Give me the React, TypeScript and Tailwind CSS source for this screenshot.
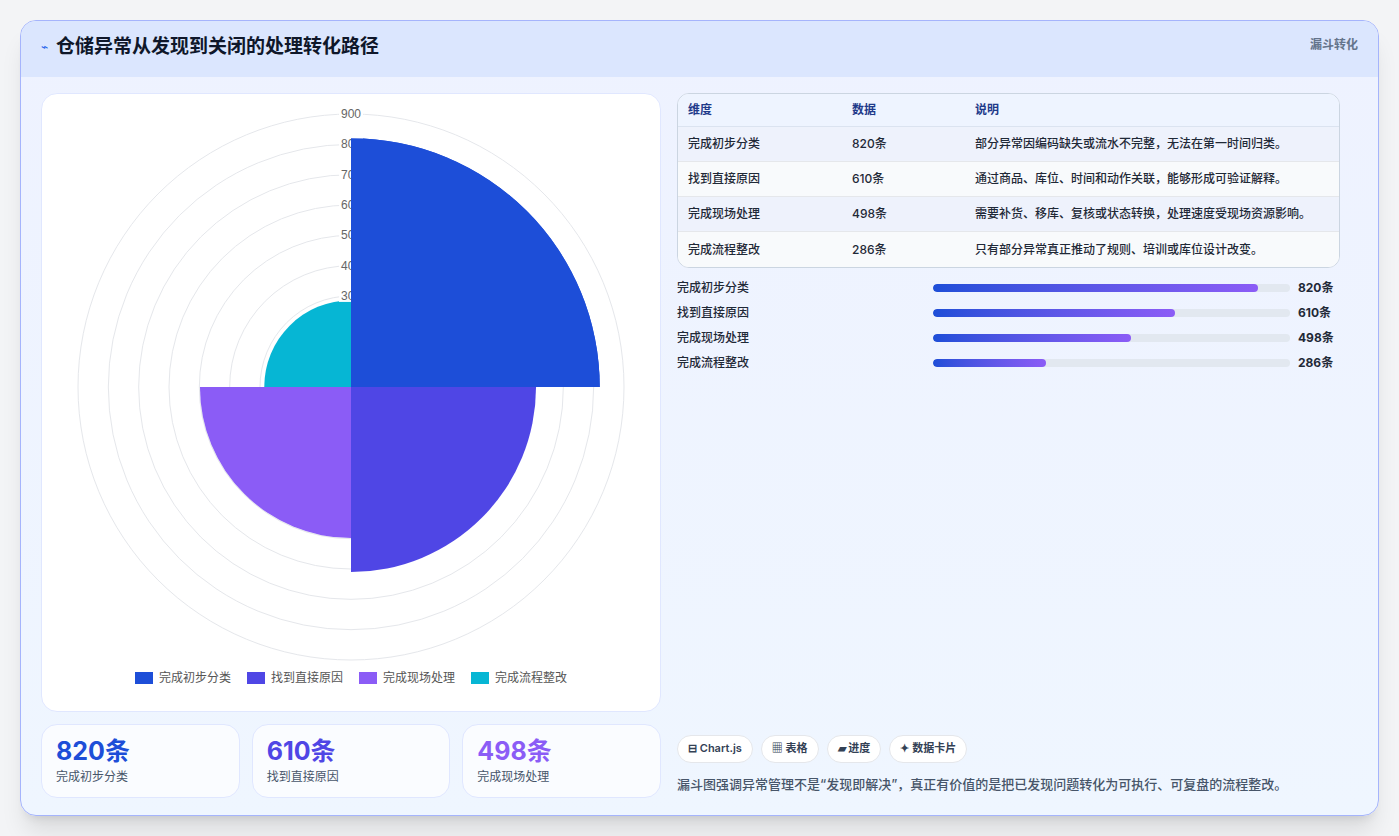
import React from "react";

const rows = [
  { name: "完成初步分类", v: 820, note: "部分异常因编码缺失或流水不完整，无法在第一时间归类。", color: "#1d4ed8" },
  { name: "找到直接原因", v: 610, note: "通过商品、库位、时间和动作关联，能够形成可验证解释。", color: "#4f46e5" },
  { name: "完成现场处理", v: 498, note: "需要补货、移库、复核或状态转换，处理速度受现场资源影响。", color: "#8b5cf6" },
  { name: "完成流程整改", v: 286, note: "只有部分异常真正推动了规则、培训或库位设计改变。", color: "#06b6d4" },
];

function sector(cx: number, cy: number, r: number, a0: number, a1: number) {
  const p = (a: number) => [cx + r * Math.sin(a), cy - r * Math.cos(a)];
  const [x0, y0] = p(a0);
  const [x1, y1] = p(a1);
  return `M${cx},${cy} L${x0},${y0} A${r},${r} 0 0 1 ${x1},${y1} Z`;
}

function Polar() {
  const cx = 310, cy = 293, k = 273 / 900;
  return (
    <svg width="620" height="570" viewBox="0 0 620 570">
      {[1, 2, 3, 4, 5, 6, 7, 8, 9].map((i) => (
        <circle key={i} cx={cx} cy={cy} r={i * 100 * k} fill="none" stroke="#e5e7eb" strokeWidth="1" />
      ))}
      {rows.map((r, i) => (
        <path key={r.name} d={sector(cx, cy, r.v * k, (i * Math.PI) / 2, ((i + 1) * Math.PI) / 2)} fill={r.color} />
      ))}
      {[3, 4, 5, 6, 7, 8, 9].map((i) => (
        <g key={i}>
          <rect x={cx - 12} y={cy - i * 100 * k - 7} width="24" height="13" fill="white" opacity={i === 9 ? 1 : 0.9} />
          <text x={cx} y={cy - i * 100 * k + 4} textAnchor="middle" fontSize="12" fill="#666" fontFamily="Liberation Sans, sans-serif">{i * 100}</text>
        </g>
      ))}
      {rows.map((r, i) => (
        <path key={"c" + i} d={sector(cx, cy, r.v * k, (i * Math.PI) / 2, ((i + 1) * Math.PI) / 2)} fill={r.color} opacity={i === 0 ? 1 : 0} />
      ))}
    </svg>
  );
}

export default function App() {
  return (
    <div className="w-[1399px] h-[836px] bg-[#f3f4f6] p-5" style={{ fontFamily: "Inter, 'Noto Sans CJK SC', sans-serif" }}>
      <div className="h-[796px] rounded-2xl border border-[#a5b4fc] bg-gradient-to-b from-[#eef2ff] to-[#eff6ff] shadow-xl overflow-hidden flex flex-col">
        <div className="h-[56px] bg-[#dbe6fe] flex items-start justify-between px-5 pt-4">
          <div className="flex items-center gap-2">
            <span className="text-[#2563eb] text-xs">⌁</span>
            <h1 className="text-[19px] font-bold text-[#0f172a] leading-none">仓储异常从发现到关闭的处理转化路径</h1>
          </div>
          <span className="text-xs font-semibold text-[#64748b]">漏斗转化</span>
        </div>
        <div className="flex gap-4 px-5 pt-4 flex-1">
          <div className="w-[620px] flex flex-col gap-3">
            <div className="h-[619px] bg-white rounded-2xl border border-[#e0e7ff] flex flex-col items-center">
              <div className="h-[572px] flex items-start pt-0"><Polar /></div>
              <div className="flex gap-4 text-xs text-[#555] mt-1">
                {rows.map((r) => (
                  <div key={r.name} className="flex items-center gap-1.5">
                    <span className="w-[18px] h-[12px] inline-block" style={{ background: r.color }} />
                    {r.name}
                  </div>
                ))}
              </div>
            </div>
            <div className="grid grid-cols-3 gap-3">
              {rows.slice(0, 3).map((r) => (
                <div key={r.name} className="h-[74px] bg-white/70 rounded-2xl border border-[#e0e7ff] px-3.5 pt-2.5">
                  <div className="text-[25px] font-bold leading-[32px]" style={{ color: r.color }}>{r.v}条</div>
                  <div className="text-xs text-[#475569] mt-0.5">{r.name}</div>
                </div>
              ))}
            </div>
          </div>
          <div className="flex-1 flex flex-col pr-[18px]">
            <div className="rounded-xl border border-[#cbd5e1] overflow-hidden bg-white">
              <div className="grid grid-cols-[164px_123px_1fr] h-[33px] items-center px-2.5 bg-[#eef4ff] text-xs font-semibold text-[#1e3a8a] border-b border-[#dbe3f0]">
                <span>维度</span><span>数据</span><span>说明</span>
              </div>
              {rows.map((r, i) => (
                <div key={r.name} className={`grid grid-cols-[164px_123px_1fr] h-[35px] items-center px-2.5 text-xs text-[#1f2937] font-medium border-b border-[#e5e7eb] last:border-b-0 ${i % 2 === 0 ? "bg-[#eef2fc]" : "bg-[#f8fafc]"}`}>
                  <span>{r.name}</span><span>{r.v}条</span><span>{r.note}</span>
                </div>
              ))}
            </div>
            <div className="flex flex-col gap-[9px] mt-3">
              {rows.map((r) => (
                <div key={r.name} className="flex items-center h-4 text-xs font-medium text-[#1f2937]">
                  <span className="w-[256px]">{r.name}</span>
                  <div className="w-[357px] h-2 rounded-full bg-[#e2e8f0] overflow-hidden">
                    <div className="h-full rounded-full bg-gradient-to-r from-[#1d4ed8] to-[#8b5cf6]" style={{ width: `${(r.v / 900) * 100}%` }} />
                  </div>
                  <span className="ml-2 font-bold">{r.v}条</span>
                </div>
              ))}
            </div>
            <div className="flex-1" />
            <div className="flex gap-2 mb-3">
              {["⊟ Chart.js", "▦ 表格", "▰ 进度", "✦ 数据卡片"].map((t) => (
                <span key={t} className="h-7 px-2.5 rounded-full bg-white border border-[#e5e7eb] text-[11px] font-semibold text-[#334155] flex items-center">{t}</span>
              ))}
            </div>
            <p className="text-[13px] text-[#475569] font-medium mb-[21px]">漏斗图强调异常管理不是“发现即解决”，真正有价值的是把已发现问题转化为可执行、可复盘的流程整改。</p>
          </div>
        </div>
      </div>
    </div>
  );
}
